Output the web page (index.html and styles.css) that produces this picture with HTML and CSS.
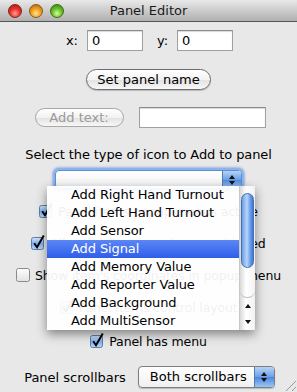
FILE: index.html
```html
<!DOCTYPE html>
<html>
<head>
 <title>Panel Editor</title>
 <link rel="stylesheet" href="styles.css">
</head>
<body>
 <svg class="defs" width="0" height="0">
  <defs>
   <linearGradient id="cbon" x1="0" y1="0" x2="0" y2="1">
    <stop offset="0" stop-color="#d4e6fb"/>
    <stop offset="0.5" stop-color="#7fb0ea"/>
    <stop offset="1" stop-color="#b6d6fa"/>
   </linearGradient>
   <linearGradient id="cboff" x1="0" y1="0" x2="0" y2="1">
    <stop offset="0" stop-color="#ffffff"/>
    <stop offset="1" stop-color="#e2e2e2"/>
   </linearGradient>
  </defs>
 </svg>

 <div class="window">
  <div class="titlebar">
   <div class="lights">
    <span class="light red"></span>
    <span class="light amber"></span>
    <span class="light green"></span>
   </div>
   <div class="title">Panel Editor</div>
  </div>

  <div class="content">
   <div class="coords">
    <span class="lbl">x:</span><span class="field xy">0</span>
    <span class="lbl lbl-y">y:</span><span class="field xy">0</span>
   </div>

   <div class="pill set-name">Set panel name</div>

   <div class="addtext">
    <div class="pill disabled">Add text:</div>
    <span class="field wide"></span>
   </div>

   <div class="caption">Select the type of icon to Add to panel</div>

   <div class="combo focus">
    <span class="combo-text"></span>
    <span class="arrows"><i class="up"></i><i class="down"></i></span>
   </div>

   <div class="check-row r1">
    <svg class="cb" width="14" height="16" viewBox="0 0 14 16"><rect x="0.5" y="3.5" width="12" height="12" rx="2" fill="url(#cbon)" stroke="#5b7ea8"/><path d="M3.2 9.2 L6 13.2 L12.8 1.5" stroke="#000" stroke-width="2" fill="none"/></svg>
    <span>Panel items popup menus active</span>
   </div>
   <div class="check-row r2">
    <svg class="cb" width="14" height="16" viewBox="0 0 14 16"><rect x="0.5" y="3.5" width="12" height="12" rx="2" fill="url(#cbon)" stroke="#5b7ea8"/><path d="M3.2 9.2 L6 13.2 L12.8 1.5" stroke="#000" stroke-width="2" fill="none"/></svg>
    <span>All panel items can be repositioned</span>
   </div>
   <div class="check-row r3">
    <svg class="cb" width="14" height="16" viewBox="0 0 14 16"><rect x="0.5" y="2.5" width="13" height="13" rx="2" fill="url(#cboff)" stroke="#8a8a8a"/></svg>
    <span>Show item's coordinates in popup menu</span>
   </div>
   <div class="check-row r4">
    <svg class="cb" width="14" height="16" viewBox="0 0 14 16"><rect x="0.5" y="3.5" width="12" height="12" rx="2" fill="url(#cbon)" stroke="#5b7ea8"/><path d="M3.2 9.2 L6 13.2 L12.8 1.5" stroke="#000" stroke-width="2" fill="none"/></svg>
    <span>Panel items control layout</span>
   </div>
   <div class="check-row r5">
    <svg class="cb" width="14" height="16" viewBox="0 0 14 16"><rect x="0.5" y="3.5" width="12" height="12" rx="2" fill="url(#cbon)" stroke="#5b7ea8"/><path d="M3.2 9.2 L6 13.2 L12.8 1.5" stroke="#000" stroke-width="2" fill="none"/></svg>
    <span>Panel has menu</span>
   </div>

   <div class="scroll-row">
    <span class="lbl">Panel scrollbars</span>
    <div class="combo plain">
     <span class="combo-text">Both scrollbars</span>
     <span class="arrows"><i class="up"></i><i class="down"></i></span>
    </div>
   </div>
  </div>

  <!-- open popup of the icon type combo -->
  <div class="popup">
   <ul class="items">
    <li>Add Right Hand Turnout</li>
    <li>Add Left Hand Turnout</li>
    <li>Add Sensor</li>
    <li class="selected">Add Signal</li>
    <li>Add Memory Value</li>
    <li>Add Reporter Value</li>
    <li>Add Background</li>
    <li>Add MultiSensor</li>
   </ul>
   <div class="vscroll">
    <div class="track"><div class="thumb"></div></div>
    <div class="step"><i class="up"></i></div>
    <div class="step"><i class="down"></i></div>
   </div>
  </div>

  <div class="grip"></div>
 </div>
</body>
</html>
```

FILE: styles.css
```css
body {
margin: 0;
padding: 0;
background-color: #e8e8e8;
}

.defs {
position: absolute;
}

.window {
width: 297px;
height: 392px;
position: relative;
overflow: hidden;
background-color: #e8e8e8;
font-family: "DejaVu Sans", sans-serif;
font-size: 12px;
color: #000;
}

.titlebar {
height: 21px;
border-bottom: 1px solid #555;
background: linear-gradient(#e8e8e8, #b0b0b0);
display: flex;
align-items: center;
position: relative;
}

.lights {
display: flex;
gap: 7px;
padding-left: 8px;
}

.light {
width: 12px;
height: 12px;
border-radius: 50%;
display: block;
}

.red {
background: radial-gradient(circle at 50% 70%, #ff9f95 0, #e8362b 45%, #a5140e 100%);
border: 1px solid #86201b;
}

.amber {
background: radial-gradient(circle at 50% 70%, #ffe39a 0, #f0a21f 45%, #a8600a 100%);
border: 1px solid #8a5a14;
}

.green {
background: radial-gradient(circle at 50% 70%, #d4ff9c 0, #6ec12a 45%, #2e7a0c 100%);
border: 1px solid #3b6d1d;
}

.title {
position: absolute;
left: 0;
right: 0;
text-align: center;
font-size: 13px;
color: #1a1a1a;
}

.content {
display: flex;
flex-direction: column;
align-items: center;
padding-top: 8px;
}

.field {
display: inline-block;
height: 21px;
box-sizing: border-box;
background: #fff;
border: 1px solid #a0a0a0;
border-top-color: #8a8a8a;
box-shadow: inset 0 1px 1px rgba(0, 0, 0, 0.15);
padding: 2px 4px;
font-size: 13px;
line-height: 15px;
}

.coords {
display: flex;
align-items: center;
height: 21px;
margin-left: 2px;
}

.coords .lbl {
margin-right: 9px;
font-size: 13px;
}

.coords .lbl-y {
margin-left: 14px;
}

.xy {
width: 56px;
}

.pill {
box-sizing: border-box;
height: 21px;
border: 1px solid #6d6d6d;
border-radius: 11px;
background: linear-gradient(#ffffff, #f2f2f2 50%, #e2e2e2 51%, #f7f7f7);
box-shadow: 0 1px 1px rgba(0, 0, 0, 0.2);
font-size: 13px;
display: flex;
align-items: center;
justify-content: center;
}

.set-name {
width: 125px;
margin-top: 18px;
}

.addtext {
display: flex;
align-items: center;
gap: 15px;
margin-top: 17px;
margin-left: 3px;
}

.pill.disabled {
width: 89px;
height: 19px;
color: #9a9a9a;
border-color: #a8a8a8;
box-shadow: none;
}

.wide {
width: 127px;
}

.caption {
margin-top: 19px;
font-size: 13px;
line-height: 16px;
letter-spacing: -0.1px;
}

.combo {
box-sizing: border-box;
display: flex;
background: linear-gradient(#ffffff, #f0f0f0);
border: 1px solid #7d7d7d;
border-radius: 4px;
overflow: hidden;
}

.combo.focus {
width: 187px;
height: 19px;
margin-top: 7px;
border-color: #5d8fd5;
box-shadow: 0 0 0 2px #8cb4ea, 0 0 2px 3px rgba(90, 140, 220, 0.5);
}

.combo-text {
flex: 1;
padding-left: 11px;
font-size: 13px;
line-height: 20px;
}

.arrows {
width: 18px;
border-left: 1px solid #5479b3;
background: linear-gradient(#b6d3f6, #6ca1e6 50%, #4c86dd 51%, #9cc6f5);
display: flex;
flex-direction: column;
align-items: center;
justify-content: center;
gap: 2px;
}

.up, .down {
display: block;
width: 0;
height: 0;
border-left: 3px solid transparent;
border-right: 3px solid transparent;
}

.up {
border-bottom: 4px solid #111;
}

.down {
border-top: 4px solid #111;
}

.check-row {
display: flex;
align-items: center;
gap: 5px;
height: 32px;
font-size: 12.5px;
letter-spacing: -0.15px;
}

.check-row.r1 {
margin-top: 6px;
}

.cb {
display: block;
margin-top: -3px;
}

.check-row.r5 {
margin-top: 2px;
}

.scroll-row {
display: flex;
align-items: center;
gap: 12px;
margin-top: 9px;
margin-left: 2px;
}

.scroll-row .lbl {
font-size: 13px;
}

.combo.plain {
width: 137px;
height: 22px;
box-shadow: 0 1px 1px rgba(0, 0, 0, 0.2);
}

.combo.plain .arrows {
width: 19px;
}

.popup {
position: absolute;
left: 47px;
top: 186px;
width: 208px;
height: 144px;
display: flex;
background: rgba(255, 255, 255, 0.94);
box-shadow: 0 4px 10px rgba(0, 0, 0, 0.45);
font-size: 13px;
letter-spacing: -0.1px;
}

.items {
list-style: none;
margin: 0;
padding: 0;
flex: 1;
}

.items li {
height: 18px;
line-height: 18px;
padding-left: 24px;
}

.items li.selected {
background: linear-gradient(#5b86f5, #2f5eea);
color: #fff;
}

.vscroll {
width: 15px;
display: flex;
flex-direction: column;
background: linear-gradient(90deg, #d8d8d8, #ffffff 40%, #f2f2f2);
border-left: 1px solid #c8c8c8;
}

.track {
flex: 1;
padding: 7px 1px 0 1px;
border-bottom: 1px solid #bdbdbd;
border-radius: 0 0 7px 7px;
}

.thumb {
height: 73px;
border-radius: 7px;
border: 1px solid #3f6fb5;
background: linear-gradient(90deg, #6e9ee4, #b6d5fb 45%, #5f95e6 80%, #3f78d6);
}

.step {
height: 16px;
display: flex;
align-items: center;
justify-content: center;
}

.grip {
position: absolute;
right: 1px;
bottom: 1px;
width: 13px;
height: 13px;
background: repeating-linear-gradient(135deg, transparent 0, transparent 3px, #9a9a9a 3px, #9a9a9a 4px);
clip-path: polygon(100% 0, 100% 100%, 0 100%);
}
```
